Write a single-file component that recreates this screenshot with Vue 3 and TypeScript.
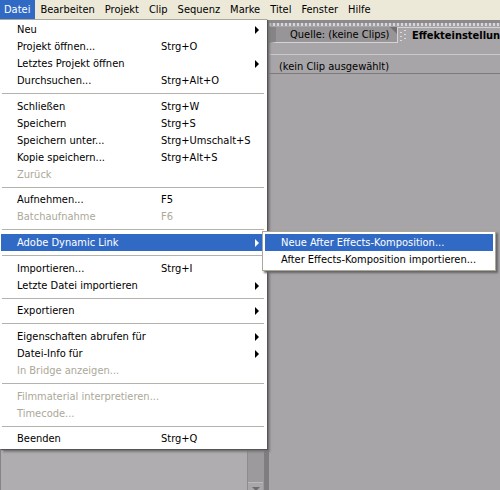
<script setup lang="ts">
import { ref } from 'vue'

interface Entry {
  label: string
  keys?: string
  sub?: boolean
  disabled?: boolean
  open?: boolean
}

const bar: string[] = ['Datei', 'Bearbeiten', 'Projekt', 'Clip', 'Sequenz', 'Marke', 'Titel', 'Fenster', 'Hilfe']
const active = ref('Datei')

const groups: Entry[][] = [
  [
    { label: 'Neu', sub: true },
    { label: 'Projekt öffnen...', keys: 'Strg+O' },
    { label: 'Letztes Projekt öffnen', sub: true },
    { label: 'Durchsuchen...', keys: 'Strg+Alt+O' },
  ],
  [
    { label: 'Schließen', keys: 'Strg+W' },
    { label: 'Speichern', keys: 'Strg+S' },
    { label: 'Speichern unter...', keys: 'Strg+Umschalt+S' },
    { label: 'Kopie speichern...', keys: 'Strg+Alt+S' },
    { label: 'Zurück', disabled: true },
  ],
  [
    { label: 'Aufnehmen...', keys: 'F5' },
    { label: 'Batchaufnahme', keys: 'F6', disabled: true },
  ],
  [{ label: 'Adobe Dynamic Link', sub: true, open: true }],
  [
    { label: 'Importieren...', keys: 'Strg+I' },
    { label: 'Letzte Datei importieren', sub: true },
  ],
  [{ label: 'Exportieren', sub: true }],
  [
    { label: 'Eigenschaften abrufen für', sub: true },
    { label: 'Datei-Info für', sub: true },
    { label: 'In Bridge anzeigen...', disabled: true },
  ],
  [
    { label: 'Filmmaterial interpretieren...', disabled: true },
    { label: 'Timecode...', disabled: true },
  ],
  [{ label: 'Beenden', keys: 'Strg+Q' }],
]

const linkEntries: string[] = ['Neue After Effects-Komposition...', 'After Effects-Komposition importieren...']
const selected = ref(linkEntries[0])
</script>

<template>
  <div class="app">
    <nav class="menubar">
      <div v-for="name in bar" :key="name" class="bar-item">
        <button type="button" class="bar-button" :class="{ active: name === active }" @click="active = name">{{ name }}</button>
        <div v-if="name === 'Datei' && active === name" class="menu">
          <div v-for="(group, g) in groups" :key="g" class="group">
            <div v-for="entry in group" :key="entry.label" class="row">
              <button type="button" class="entry" :class="{ open: entry.open }" :disabled="entry.disabled">
                <span class="label">{{ entry.label }}</span>
                <span class="keys">{{ entry.keys }}</span>
                <svg v-if="entry.sub" class="arrow" viewBox="0 0 4 8"><path d="M0 0L4 4L0 8Z" /></svg>
              </button>
              <div v-if="entry.open" class="submenu">
                <button
                  v-for="item in linkEntries"
                  :key="item"
                  type="button"
                  class="sub-entry"
                  :class="{ open: item === selected }"
                  @mouseenter="selected = item"
                >{{ item }}</button>
              </div>
            </div>
          </div>
        </div>
      </div>
    </nav>
    <main class="workspace">
      <section class="bin">
        <div class="bin-list"></div>
        <div class="track">
          <button type="button" class="scroll-down" aria-label="Nach unten">
            <svg viewBox="0 0 8 4"><path d="M0 0H8L4 4Z" /></svg>
          </button>
        </div>
      </section>
      <section class="effects">
        <div class="grip"></div>
        <div class="tabs">
          <button type="button" class="tab source">
            <span>Quelle: (keine Clips)</span>
            <svg class="corner" viewBox="0 0 7 7"><path d="M0 0H7V7Z" /></svg>
          </button>
          <button type="button" class="tab current">
            <svg class="dots" viewBox="0 0 6 12">
              <path d="M0 2h2v1H0zM4 0h2v1H4zM0 6h2v1H0zM4 4h2v1H4zM0 10h2v1H0zM4 8h2v1H4z" />
            </svg>
            <span>Effekteinstellungen</span>
          </button>
        </div>
        <div class="band"></div>
        <div class="status">(kein Clip ausgewählt)</div>
        <div class="canvas"></div>
      </section>
    </main>
  </div>
</template>

<style>
body {
  background: #a7a5a7;
}
</style>

<style scoped>
.app {
  display: flex;
  flex-direction: column;
  min-height: 100vh;
  overflow: hidden;
  font-family: "DejaVu Sans Condensed", "DejaVu Sans", sans-serif;
  font-size: 11px;
  line-height: 17px;
  color: #000;
}
button {
  margin: 0;
  padding: 0;
  border: 0;
  background: none;
  font: inherit;
  color: inherit;
  text-align: left;
  white-space: nowrap;
}
.menubar {
  display: flex;
  height: 20px;
  background: #ece9d8;
}
.bar-item {
  position: relative;
}
.bar-button {
  display: block;
  height: 19px;
  padding: 0 5px;
}
.bar-item:first-child .bar-button {
  padding-left: 4px;
}
.bar-button.active {
  background: #316ac5;
  color: #fff;
}
.menu {
  position: absolute;
  z-index: 2;
  top: 19px;
  left: 0;
  width: 267px;
  padding: 1px 0 2px;
  box-sizing: border-box;
  border-top: 1px solid #aca899;
  background: #fff;
  box-shadow: 1px 1px 1px #555, 3px 3px 2px #7c7a7c;
}
.group + .group {
  margin-top: 4px;
}
.group + .group::before {
  content: "";
  display: block;
  height: 1px;
  margin: 0 3px 4px 2px;
  background: #b4b2ac;
}
.group:nth-child(3n)::before {
  margin-bottom: 3px;
}
.row {
  position: relative;
  padding: 0 5px 0 1px;
}
.entry {
  display: grid;
  grid-template-columns: 144px 1fr 4px;
  align-items: center;
  width: 100%;
  height: 17px;
  padding: 0 3px 0 16px;
}
.label {
  white-space: nowrap;
}
.entry:disabled {
  color: #aca899;
}
.open {
  background: #316ac5;
  color: #fff;
}
.arrow {
  width: 4px;
  height: 8px;
  fill: currentColor;
}
.submenu {
  position: absolute;
  z-index: 3;
  top: -3px;
  left: 262px;
  width: 234px;
  padding: 2px;
  box-sizing: border-box;
  border: 1px solid #aca899;
  background: #fff;
  box-shadow: 2px 2px 2px #666;
}
.sub-entry {
  display: block;
  width: 100%;
  height: 17px;
  padding-left: 16px;
}
.workspace {
  display: grid;
  grid-template-columns: 269px 1fr;
  flex: 1;
}
.bin {
  display: flex;
  background: #7f7d7f;
}
.bin-list {
  flex: 1;
  border-left: 1px solid #858385;
  background: #afadaf;
}
.track {
  display: flex;
  align-items: flex-end;
  width: 16px;
  margin-right: 5px;
  border-left: 1px solid #8d8b8d;
  background: #9c9a9c;
}
.scroll-down {
  display: flex;
  justify-content: center;
  width: 15px;
  height: 8px;
  padding-top: 4px;
  box-sizing: border-box;
  border-top: 1px solid #bbb9bb;
  background: #a9a7a9;
}
.scroll-down svg {
  width: 8px;
  height: 4px;
  fill: #6d6b6d;
}
.effects {
  display: flex;
  flex-direction: column;
  min-width: 0;
  border-top: 3px solid #8b898b;
  background: #a7a5a7;
}
.grip {
  height: 3px;
  margin-bottom: 1px;
  background: repeating-linear-gradient(90deg, #d8d6d8 0 2px, #a09ea0 2px 4px);
}
.tabs {
  display: flex;
  height: 16px;
  overflow: hidden;
}
.tab {
  display: flex;
  align-items: center;
  flex: none;
  box-sizing: border-box;
}
.tab.source {
  justify-content: space-between;
  align-items: flex-start;
  width: 129px;
  padding-left: 14px;
  border-left: 7px solid #868486;
  border-right: 1px solid #d5d3d5;
  border-bottom: 1px solid #d5d3d5;
  background: #979597;
  line-height: 16px;
}
.corner {
  width: 7px;
  height: 7px;
  fill: #737173;
}
.tab.current {
  gap: 6px;
  padding-left: 2px;
  border-top: 1px solid #d5d3d5;
  font-weight: bold;
}
.dots {
  width: 6px;
  height: 12px;
  fill: #dddbdd;
}
.band {
  height: 11px;
}
.status {
  height: 20px;
  padding-left: 10px;
  border-top: 1px solid #cbc9cb;
  border-bottom: 1px solid #7d7b7d;
  box-sizing: border-box;
  line-height: 23px;
}
.canvas {
  flex: 1;
}
</style>
